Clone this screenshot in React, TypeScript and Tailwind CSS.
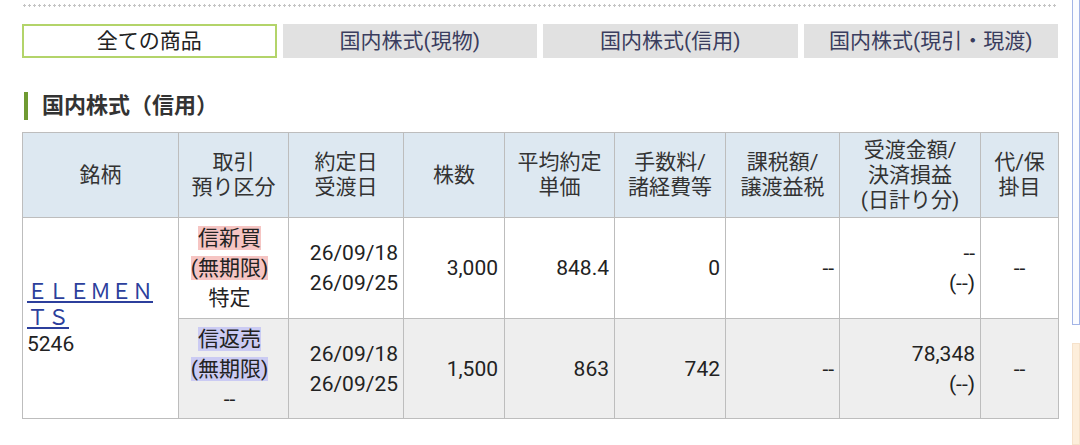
import React from "react";

const tabs = ["全ての商品", "国内株式(現物)", "国内株式(信用)", "国内株式(現引・現渡)"];

const cols = [156, 110, 115, 101, 110, 111, 114, 141, 78];

const heads: string[][] = [
  ["銘柄"],
  ["取引", "預り区分"],
  ["約定日", "受渡日"],
  ["株数"],
  ["平均約定", "単価"],
  ["手数料/", "諸経費等"],
  ["課税額/", "譲渡益税"],
  ["受渡金額/", "決済損益", "(日計り分)"],
  ["代/保", "掛目"],
];

type Row = {
  kind: string;
  kindBg: string;
  account: string;
  dates: [string, string];
  qty: string;
  price: string;
  fee: string;
  tax: string;
  amount: [string, string];
  margin: string;
  bg: string;
};

const rows: Row[] = [
  {
    kind: "信新買",
    kindBg: "bg-[#f6c5c3]",
    account: "特定",
    dates: ["26/09/18", "26/09/25"],
    qty: "3,000",
    price: "848.4",
    fee: "0",
    tax: "--",
    amount: ["--", "(--)"],
    margin: "--",
    bg: "bg-white",
  },
  {
    kind: "信返売",
    kindBg: "bg-[#cbcbf3]",
    account: "--",
    dates: ["26/09/18", "26/09/25"],
    qty: "1,500",
    price: "863",
    fee: "742",
    tax: "--",
    amount: ["78,348", "(--)"],
    margin: "--",
    bg: "bg-[#eeeeee]",
  },
];

const cell = "border border-[#bdbdbd] align-middle";

export default function App() {
  return (
    <div
      className="w-[1080px] h-[445px] overflow-hidden flex bg-white text-[#222]"
      style={{ fontFamily: "Roboto, 'Noto Sans CJK JP', sans-serif" }}
    >
      <div className="w-[1072px] pl-[22px] pr-[14px]">
        <div className="mt-[4px] h-[3px] bg-[radial-gradient(circle,#c4c4c4_1px,transparent_1.2px)] bg-[length:5px_3px]" />

        <div className="mt-[17px] grid grid-cols-4 gap-[6px]">
          {tabs.map((t, i) => (
            <div
              key={t}
              className={`h-[34px] flex items-center justify-center text-[21px] leading-none ${
                i === 0
                  ? "border-2 border-[#b3d46a] bg-white text-[#222]"
                  : "bg-[#e1e1e1] text-[#3a3d5e]"
              }`}
            >
              {t}
            </div>
          ))}
        </div>

        <div className="mt-[34px] flex items-center gap-[14px]">
          <div className="w-[4px] h-[28px] bg-[#6f9a32] ml-[2px]" />
          <h2 className="text-[22px] font-bold text-[#333] leading-none">国内株式（信用）</h2>
        </div>

        <table className="mt-[12px] w-[1036px] table-fixed border-collapse border border-[#b5b5b5]">
          <colgroup>
            {cols.map((w, i) => (
              <col key={i} style={{ width: w }} />
            ))}
          </colgroup>
          <thead>
            <tr className="h-[85px] bg-[#dde8f1]">
              {heads.map((h, i) => (
                <th key={i} className={`${cell} font-normal text-center text-[21px] leading-[25px] text-[#333]`}>
                  {h.map((l) => (
                    <div key={l}>{l}</div>
                  ))}
                </th>
              ))}
            </tr>
          </thead>
          <tbody className="text-[21px] leading-[30px]">
            {rows.map((r, i) => (
              <tr key={i} className={`${i === 0 ? "h-[101px]" : "h-[100px]"} ${r.bg}`}>
                {i === 0 && (
                  <td rowSpan={2} className={`${cell} bg-white pl-[4px] text-left`}>
                    <div className="w-[132px] leading-[26px]">
                      <a href="#" className="text-[#2c3f9c] underline underline-offset-2 break-all">
                        ＥＬＥＭＥＮＴＳ
                      </a>
                      <div className="text-[#222]">5246</div>
                    </div>
                  </td>
                )}
                <td className={`${cell} text-center pr-[8px]`}>
                  <div>
                    <span className={r.kindBg}>{r.kind}</span>
                  </div>
                  <div>
                    <span className={r.kindBg}>(無期限)</span>
                  </div>
                  <div>{r.account}</div>
                </td>
                <td className={`${cell} text-right pr-[5px]`}>
                  <div>{r.dates[0]}</div>
                  <div>{r.dates[1]}</div>
                </td>
                <td className={`${cell} text-right pr-[6px]`}>{r.qty}</td>
                <td className={`${cell} text-right pr-[5px]`}>{r.price}</td>
                <td className={`${cell} text-right pr-[5px]`}>{r.fee}</td>
                <td className={`${cell} text-right pr-[5px]`}>{r.tax}</td>
                <td className={`${cell} text-right pr-[5px]`}>
                  <div>{r.amount[0]}</div>
                  <div>{r.amount[1]}</div>
                </td>
                <td className={`${cell} text-center`}>{r.margin}</td>
              </tr>
            ))}
          </tbody>
        </table>
      </div>

      <div className="flex-1 flex flex-col">
        <div className="h-[325px] border border-t-0 border-[#a3b5e6] bg-[#fbfcff]" />
        <div className="mt-[18px] flex-1 bg-[#fdeedb] border border-[#f6e2cb]" />
      </div>
    </div>
  );
}
